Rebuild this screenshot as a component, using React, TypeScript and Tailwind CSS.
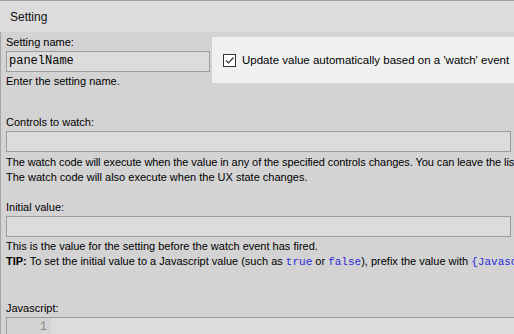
import React from "react";

const sans = { fontFamily: '"Liberation Sans", Arial, sans-serif' };

function Field({ value }: { value?: string }) {
  return (
    <div className="h-[21px] border border-[#9c9c9c] bg-[#dcdcdc] px-[2px] font-['Liberation_Mono',monospace] text-[12px] leading-[19px] text-black">
      {value}
    </div>
  );
}

export default function App() {
  return (
    <div
      className="h-[334px] w-[514px] overflow-hidden bg-[#d3d3d3] text-[11px] text-black"
      style={sans}
    >
      {/* title bar */}
      <div className="h-px bg-[#a0a0a0]" />
      <div className="flex h-[31px] items-center bg-[#dcdcdc] pl-[10px] text-[12px] text-[#111]">
        Setting
      </div>

      <div className="h-[302px] border-l border-[#a5a5a5] pl-[5px] leading-[15px] whitespace-nowrap">
        {/* Setting name + watch option */}
        <div className="flex">
          <div className="w-[204px] pt-[3px]">
            <div className="h-[16px]">Setting name:</div>
            <Field value="panelName" />
            <div className="mt-[2px]">Enter the setting name.</div>
          </div>
          <div className="ml-[2px] mt-[5px] flex h-[46px] flex-1 items-center bg-[#f0f0f0] pl-[11px]">
            <div className="flex h-[13px] w-[13px] items-center justify-center border border-[#333] bg-white">
              <svg width="11" height="11" viewBox="0 0 11 11">
                <path d="M2 5.5 L4.5 8 L9.5 2.5" fill="none" stroke="#333" strokeWidth="1.2" />
              </svg>
            </div>
            <span className="ml-[6px] text-[11.5px]">
              Update value automatically based on a 'watch' event
            </span>
          </div>
        </div>

        {/* Controls to watch */}
        <div className="mt-[26px] w-[505px]">
          <div className="h-[16px]">Controls to watch:</div>
          <Field />
          <div className="mt-[3px] tracking-[-0.08px]">
            The watch code will execute when the value in any of the specified controls changes. You can leave the list empty.
          </div>
          <div>The watch code will also execute when the UX state changes.</div>
        </div>

        {/* Initial value */}
        <div className="mt-[15px] w-[505px]">
          <div className="h-[16px]">Initial value:</div>
          <Field />
          <div className="mt-[2px]">This is the value for the setting before the watch event has fired.</div>
          <div>
            <b>TIP:</b> To set the initial value to a Javascript value (such as{" "}
            <span className="font-['Liberation_Mono',monospace] text-[#2a2ad8]">true</span> or{" "}
            <span className="font-['Liberation_Mono',monospace] text-[#2a2ad8]">false</span>), prefix the value with{" "}
            <span className="font-['Liberation_Mono',monospace] text-[#2a2ad8]">{"{Javascript}"}</span>
          </div>
        </div>

        {/* Javascript editor */}
        <div className="mt-[31px]">
          <div className="h-[16px]">Javascript:</div>
          <div className="flex h-[20px] border-l border-t border-[#9c9c9c] bg-[#dcdcdc]">
            <div className="w-[44px] bg-[#d3d3d3] pr-[4px] text-right font-['Liberation_Mono',monospace] text-[12px] leading-[18px] text-[#888]">
              1
            </div>
            <div className="flex-1" />
          </div>
        </div>
      </div>
    </div>
  );
}
